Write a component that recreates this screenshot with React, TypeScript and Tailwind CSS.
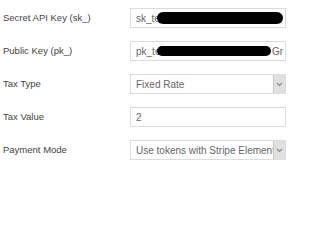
const Chevron = () => (
  <svg width="7" height="5" viewBox="0 0 7 5" fill="none">
    <path d="M1 1l2.5 2.5L6 1" stroke="#888" strokeWidth="1.1" />
  </svg>
);

const Row = ({ label, children }: { label: string; children: React.ReactNode }) => (
  <div className="flex items-center h-[20px]">
    <span className="w-[127px] shrink-0 text-[9.5px] text-[#444]">{label}</span>
    {children}
  </div>
);

const Box = ({ children }: { children: React.ReactNode }) => (
  <div className="flex items-center w-[156px] h-[20px] border border-[#dcdcdc] bg-white pl-[5px] pr-[2px] text-[10px] text-[#666] overflow-hidden whitespace-nowrap">
    {children}
  </div>
);

const Select = ({ value }: { value: string }) => (
  <div className="flex items-stretch w-[156px] h-[20px] border border-[#dcdcdc] bg-white text-[10px] text-[#666]">
    <span className="flex-1 flex items-center pl-[5px] overflow-hidden whitespace-nowrap">{value}</span>
    <span className="w-[12px] flex items-center justify-center bg-[#e0e0e0] border-l border-[#c8c8c8]">
      <Chevron />
    </span>
  </div>
);

export default function App() {
  return (
    <div
      className="w-[300px] h-[226px] bg-white pl-[3px] pt-[8px] flex flex-col gap-[13px]"
      style={{ fontFamily: '"Liberation Sans", Arial, sans-serif' }}
    >
      <Row label="Secret API Key (sk_)">
        <Box>
          <span>sk_te</span>
          <span className="ml-[-3px] w-[126px] h-[12px] rounded-full bg-black" />
        </Box>
      </Row>
      <Row label="Public Key (pk_)">
        <Box>
          <span>pk_te</span>
          <span className="ml-[-3px] w-[116px] h-[10px] rounded-full bg-black" />
          <span className="ml-[1px]">Gr</span>
        </Box>
      </Row>
      <Row label="Tax Type">
        <Select value="Fixed Rate" />
      </Row>
      <Row label="Tax Value">
        <Box>
          <span>2</span>
        </Box>
      </Row>
      <Row label="Payment Mode">
        <Select value="Use tokens with Stripe Elements" />
      </Row>
    </div>
  );
}
